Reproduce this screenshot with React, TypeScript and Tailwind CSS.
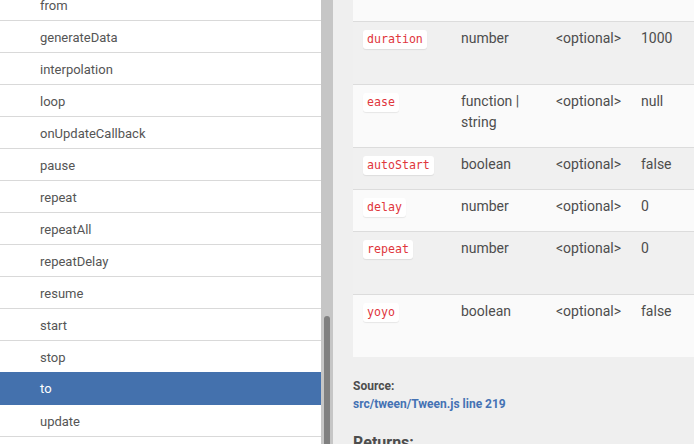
const navItems = [
  "from",
  "generateData",
  "interpolation",
  "loop",
  "onUpdateCallback",
  "pause",
  "repeat",
  "repeatAll",
  "repeatDelay",
  "resume",
  "start",
  "stop",
  "to",
  "update",
  "yoyo",
];

const params = [
  { name: "", type: [""], def: "", h: "h-[22px]", top: true },
  { name: "duration", type: ["number"], def: "1000", h: "h-[63px]" },
  { name: "ease", type: ["function |", "string"], def: "null", h: "h-[63px]" },
  { name: "autoStart", type: ["boolean"], def: "false", h: "h-[42px]" },
  { name: "delay", type: ["number"], def: "0", h: "h-[42px]" },
  { name: "repeat", type: ["number"], def: "0", h: "h-[63px]" },
  { name: "yoyo", type: ["boolean"], def: "false", h: "h-[62px]" },
];

export default function App() {
  return (
    <div className="flex h-[444px] w-[694px] overflow-hidden bg-[#efefef] font-['Roboto',sans-serif]">
      {/* sidebar */}
      <div className="w-[321px] shrink-0 bg-white overflow-hidden">
        <div className="-mt-[11px]">
          {navItems.map((item) => {
            const active = item === "to";
            return (
              <div
                key={item}
                className={`h-[32px] pl-[40px] pt-[2px] flex items-center text-[13px] border-b ${
                  active
                    ? "bg-[#4471ad] border-[#4471ad] text-white -mt-px h-[33px]"
                    : "border-[#d9d9d9] text-[#555]"
                }`}
              >
                {item}
              </div>
            );
          })}
        </div>
      </div>

      {/* scrollbar */}
      <div className="w-[12px] shrink-0 bg-[#c6c6c6] flex flex-col items-center pt-[316px]">
        <div className="w-[6px] flex-1 rounded-t-full bg-[#808080]" />
      </div>

      {/* content */}
      <div className="flex-1 pl-[20px] overflow-hidden">
        <div className="w-[420px]">
          {params.map((p, i) => (
            <div
              key={i}
              className={`flex ${p.h} ${i % 2 === 0 ? "bg-[#fafafa]" : "bg-[#f0f0f0]"} ${
                i < params.length - 1 ? "border-b border-[#dcdcdc]" : ""
              } text-[14px] leading-[21px] text-[#4d4d4d]`}
            >
              {!p.top && (
                <>
                  <div className="w-[108px] pl-[10px] pt-[6px]">
                    <span className="inline-block bg-white rounded-[3px] shadow-[0_1px_1px_rgba(0,0,0,0.08)] px-[4px] leading-[19px] text-[11.6px] text-[#e0363c] font-['DejaVu_Sans_Mono',monospace]">
                      {p.name}
                    </span>
                  </div>
                  <div className="w-[95px] pt-[6px]">
                    {p.type.map((t) => (
                      <div key={t}>{t}</div>
                    ))}
                  </div>
                  <div className="w-[85px] pt-[6px]">&lt;optional&gt;</div>
                  <div className="flex-1 pt-[6px]">{p.def}</div>
                </>
              )}
            </div>
          ))}
        </div>

        <div className="mt-[20px] text-[12px] font-bold text-[#4d4d4d] leading-[18px]">Source:</div>
        <div className="text-[12px] font-bold text-[#4472b4] leading-[18px]">
          src/tween/Tween.js line 219
        </div>
        <div className="mt-[18px] text-[16px] font-bold text-[#4d4d4d]">Returns:</div>
      </div>
    </div>
  );
}
